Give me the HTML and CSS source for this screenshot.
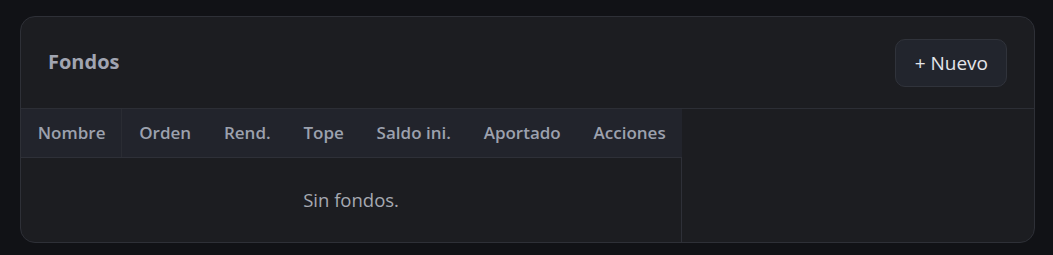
FILE: index.html
```html
<!DOCTYPE html>
<html>
<head lang="es">
    <meta charset="UTF-8">
    <title>Fondos</title>
    <link rel="stylesheet" href="styles.css">
</head>
<body>
    <div class="card">
        <div class="card-header">
            <h2 class="card-title">Fondos</h2>
            <button class="btn">+ Nuevo</button>
        </div>

        <div class="card-body">
            <table class="fund-table">
                <thead>
                    <tr>
                        <th class="sticky">Nombre</th>
                        <th>Orden</th>
                        <th>Rend.</th>
                        <th>Tope</th>
                        <th>Saldo ini.</th>
                        <th>Aportado</th>
                        <th>Acciones</th>
                    </tr>
                </thead>
                <tbody>
                    <tr>
                        <td class="empty" colspan="7">Sin fondos.</td>
                    </tr>
                </tbody>
            </table>
        </div>
    </div>
</body>
</html>
```

FILE: styles.css
```css
body {
    margin: 0;
    padding: 16px 18px 12px 20px;
    background-color: #111216;
    font-family: "Open Sans", "Noto Sans", sans-serif;
}
.card {
    background-color: #1c1d21;
    border: 1px solid #2e3037;
    border-radius: 15px;
    overflow: hidden;
}
.card-header {
    display: flex;
    align-items: center;
    justify-content: space-between;
    height: 91px;
    padding: 0 27px;
    border-bottom: 1px solid #2c2e35;
}
.card-title {
    margin: 0 0 2px 0;
    font-size: 20px;
    font-weight: 700;
    color: #a1a5b1;
}
.btn {
    height: 48px;
    padding: 0 18px 0 19px;
    background-color: #22252d;
    border: 1px solid #30333b;
    border-radius: 10px;
    color: #e4e6ea;
    font-family: "Open Sans", "Noto Sans", sans-serif;
    font-size: 19px;
    cursor: pointer;
}
.card-body {
    display: flex;
}
.fund-table {
    border-collapse: collapse;
}
.fund-table th {
    height: 46px;
    padding: 0 16px 2px 16.8px;
    background-color: #22242c;
    color: #9ca1ae;
    font-size: 17px;
    font-weight: 600;
    text-align: left;
    white-space: nowrap;
    border-bottom: 1px solid #2e3038;
}
.fund-table th.sticky {
    border-right: 1px solid #2a2c33;
}
.fund-table td.empty {
    height: 82px;
    padding: 0 0 2px 0;
    text-align: center;
    color: #a6a9b1;
    font-size: 18.5px;
    border-right: 1px solid #2e3038;
}
```
